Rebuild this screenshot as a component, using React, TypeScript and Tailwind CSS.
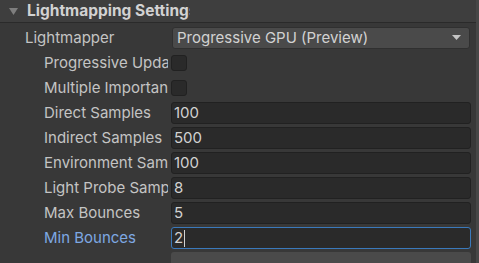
import React from "react";

const font = { fontFamily: "Inter, 'Noto Sans', sans-serif" };

function Label({ text, indent = true, blue = false }: { text: string; indent?: boolean; blue?: boolean }) {
  return (
    <div
      className={`shrink-0 overflow-hidden whitespace-nowrap text-[15px] leading-[22px] ${indent ? "pl-[44px] w-[168px]" : "pl-[25px] w-[172px]"} ${blue ? "text-[#7ea8e3]" : "text-[#c4c4c4]"}`}
    >
      {text}
    </div>
  );
}

function Field({ label, value, focused = false }: { label: string; value: string; focused?: boolean }) {
  return (
    <div className="flex h-[22px] items-center">
      <Label text={label} blue={focused} />
      <div
        className={`ml-[3px] flex h-[22px] w-[300px] items-center rounded-[3px] border bg-[#2a2a2a] pl-[2px] text-[15px] text-[#d2d2d2] ${focused ? "border-[#3a79bb]" : "border-[#212121]"}`}
      >
        {value}
        {focused && <span className="ml-[1px] inline-block h-[17px] w-[1px] bg-[#d2d2d2]" />}
      </div>
    </div>
  );
}

function Check({ label }: { label: string }) {
  return (
    <div className="flex h-[22px] items-center">
      <Label text={label} />
      <div className="ml-[3px] h-[16px] w-[16px] rounded-[3px] border border-[#212121] bg-[#2a2a2a]" />
    </div>
  );
}

export default function App() {
  return (
    <div className="flex h-[263px] w-[479px] overflow-hidden bg-[#383838]" style={font}>
      <div className="flex w-[476px] flex-col">
        <div className="flex h-[23px] items-center border-b border-[#2a2a2a] bg-[#3e3e3e]">
          <svg width="9" height="8" viewBox="0 0 9 8" className="ml-[9px] mt-[1px]">
            <path d="M0 0 H9 L4.5 7 Z" fill="#7e7e7e" />
          </svg>
          <div className="ml-[9px] w-[163px] overflow-hidden whitespace-nowrap text-[15.5px] font-bold text-[#d2d2d2]">
            Lightmapping Settings
          </div>
        </div>
        <div className="mt-[4px] flex h-[22px] items-center">
          <Label text="Lightmapper" indent={false} />
          <div className="flex h-[22px] w-[298px] items-center justify-between rounded-[3px] border border-[#303030] bg-[#4a4a4a] pl-[4px] pr-[8px] text-[15px] text-[#d2d2d2]">
            <span>Progressive GPU (Preview)</span>
            <svg width="9" height="6" viewBox="0 0 9 6">
              <path d="M0 0 H9 L4.5 5 Z" fill="#c4c4c4" />
            </svg>
          </div>
        </div>
        <div className="mt-[3px] flex flex-col gap-[3px]">
          <Check label="Progressive Updates" />
          <Check label="Multiple Importance Sampling" />
          <Field label="Direct Samples" value="100" />
          <Field label="Indirect Samples" value="500" />
          <Field label="Environment Samples" value="100" />
          <Field label="Light Probe Sample Multiplier" value="8" />
          <Field label="Max Bounces" value="5" />
          <Field label="Min Bounces" value="2" focused />
          <div className="flex h-[22px] items-center">
            <div className="w-[168px] shrink-0" />
            <div className="ml-[3px] h-[22px] w-[300px] rounded-[3px] bg-[#4a4a4a]" />
          </div>
        </div>
      </div>
      <div className="w-[3px] bg-[#474747]" />
    </div>
  );
}
